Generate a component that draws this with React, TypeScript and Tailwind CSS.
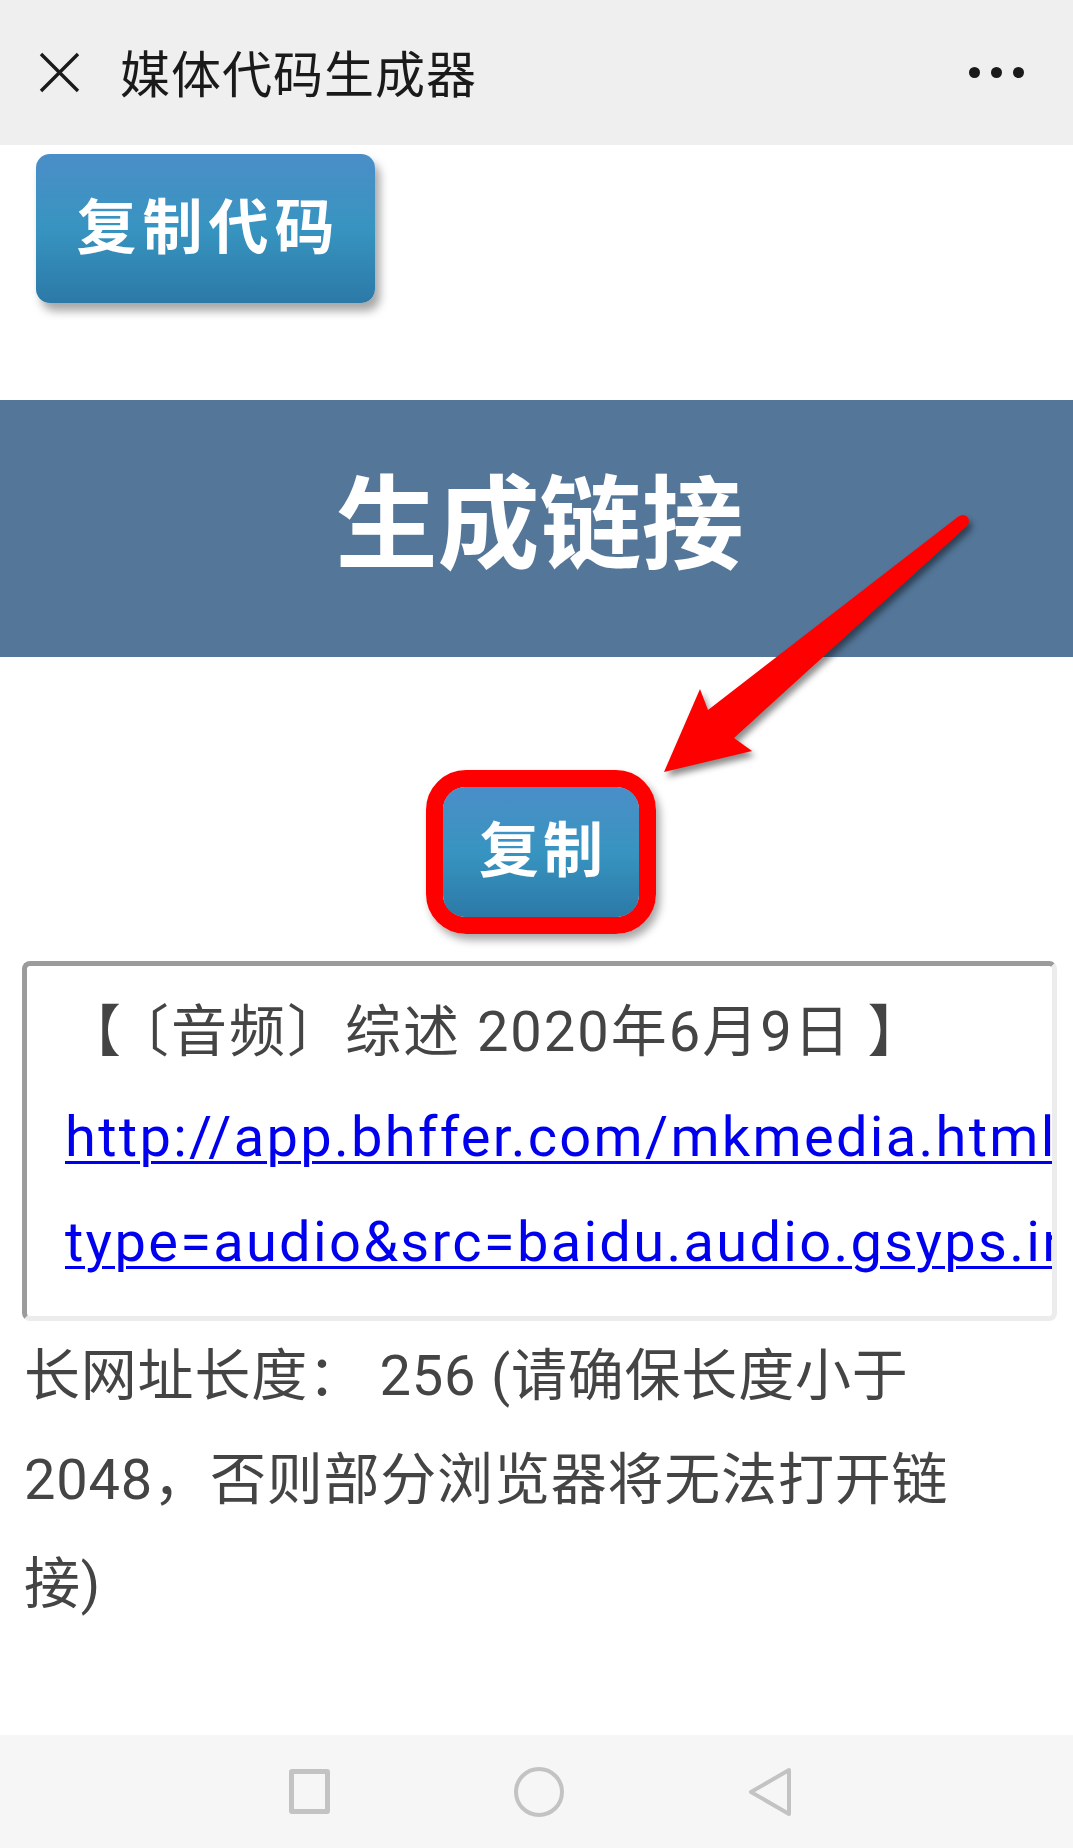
import React from 'react'

function CloseIcon() {
  return (
    <svg width="41" height="41" viewBox="0 0 41 41" fill="none">
      <path d="M2 2L39 39M39 2L2 39" stroke="#1a1a1a" strokeWidth="3.4" />
    </svg>
  )
}

function Arrow() {
  // annotation drawn over the page
  return (
    <svg
      className="pointer-events-none absolute left-[640px] top-[500px] h-[300px] w-[350px] drop-shadow-[3px_5px_3px_rgba(0,0,0,0.45)]"
      viewBox="0 0 350 300"
    >
      <polygon points="24,272 60,189 68,210 319,16 327,26 94,238 112,251" fill="#ff0000" />
      <circle cx="323" cy="21" r="6" fill="#ff0000" />
    </svg>
  )
}

function NavBar() {
  return (
    <div className="mt-auto flex h-[113px] items-center justify-center gap-[184px] bg-[#f6f6f6] pl-[8px]">
      <div className="h-[45px] w-[41px] rounded-[3px] border-[5px] border-[#c3c3c3]" />
      <div className="h-[50px] w-[50px] rounded-full border-[4px] border-[#c3c3c3]" />
      <svg width="44" height="50" viewBox="0 0 44 50" fill="none">
        <path d="M41 3L3 25L41 47Z" stroke="#c3c3c3" strokeWidth="4" strokeLinejoin="round" />
      </svg>
    </div>
  )
}

export default function App() {
  return (
    <div className="relative flex min-h-[1848px] w-[1073px] flex-col bg-white font-['Roboto','Noto_Sans_CJK_SC',sans-serif]">
      <header className="flex h-[145px] shrink-0 items-center bg-[#efefef] pl-[39px] pr-[49px]">
        <CloseIcon />
        <h1 className="ml-[40px] mt-[6px] text-[50px] leading-none tracking-[1px] text-[#1a1a1a]">媒体代码生成器</h1>
        <div className="ml-auto flex gap-[11px]">
          <span className="h-[11px] w-[11px] rounded-full bg-[#1a1a1a]" />
          <span className="h-[11px] w-[11px] rounded-full bg-[#1a1a1a]" />
          <span className="h-[11px] w-[11px] rounded-full bg-[#1a1a1a]" />
        </div>
      </header>

      <button className="ml-[36px] mt-[9px] flex h-[149px] w-[339px] shrink-0 items-center justify-center rounded-[14px] bg-gradient-to-b from-[#4a8ec8] via-[#3794c0] to-[#2c79a7] pl-[6px] text-[60px] font-bold tracking-[6px] text-white shadow-[5px_8px_10px_rgba(0,0,0,0.35)]">
        复制代码
      </button>

      <div className="mt-[97px] flex h-[257px] shrink-0 items-center justify-center bg-[#537699] pb-[6px] pl-[6px]">
        <span className="text-[102px] font-bold leading-none text-white">生成链接</span>
      </div>

      <div className="mt-[113px] flex justify-center">
        <div className="ml-[9px] rounded-[40px] border-[17px] border-[#ff0000] shadow-[4px_6px_8px_rgba(0,0,0,0.35)]">
          <button className="flex h-[130px] w-[196px] items-center justify-center rounded-[22px] bg-gradient-to-b from-[#4a8ec8] via-[#3794c0] to-[#2c79a7] pl-[4px] text-[60px] font-bold tracking-[4px] text-white">
            复制
          </button>
        </div>
      </div>

      <div className="ml-[22px] mr-[16px] mt-[27px] overflow-hidden rounded-[8px] border-[5px] border-b-[#ececec] border-l-[#9b9b9b] border-r-[#ececec] border-t-[#9b9b9b] pb-[21px] pl-[38px] pt-[14px] text-[56px] leading-[105px]">
        <p className="whitespace-nowrap tracking-[2px] text-[#444]">
          <span className="mr-[18px]">【</span>〔音频〕综述 2020年6月9日 】
        </p>
        <a
          href="#"
          className="block whitespace-nowrap tracking-[2.3px] text-[#0000ee] underline decoration-[3px] underline-offset-[5px]"
        >
          <span className="block">http://app.bhffer.com/mkmedia.html?</span>
          <span className="block">type=audio&amp;src=baidu.audio.gsyps.info/2020/06/09</span>
        </a>
      </div>

      <p className="mt-[3px] pl-[24px] text-[56px] leading-[104px] tracking-[0.8px] text-[#444]">
        长网址长度： 256 (请确保长度小于
        <br />
        2048，否则部分浏览器将无法打开链
        <br />
        接)
      </p>

      <NavBar />
      <Arrow />
    </div>
  )
}
